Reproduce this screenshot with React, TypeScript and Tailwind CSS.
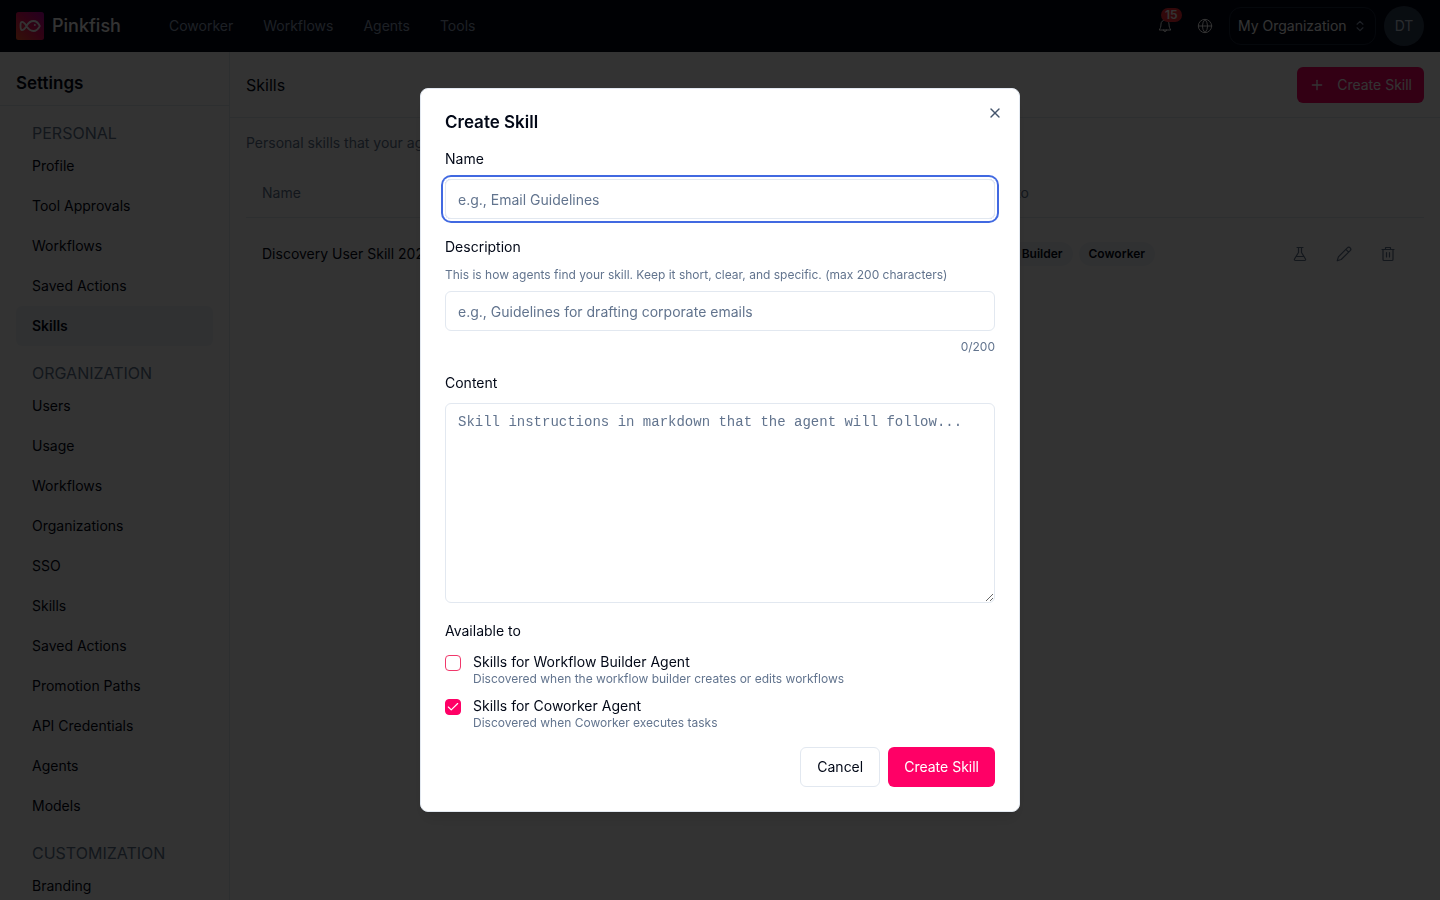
import { useState } from 'react'
import { Check, ChevronsUpDown, Globe, Plus, X } from 'lucide-react'

const NAV_LINKS = ['Coworker', 'Workflows', 'Agents', 'Tools']

const SECTIONS = [
    { title: 'PERSONAL', items: ['Profile', 'Tool Approvals', 'Workflows', 'Saved Actions', 'Skills'], active: 'Skills' },
    {
        title: 'ORGANIZATION',
        items: ['Users', 'Usage', 'Workflows', 'Organizations', 'SSO', 'Skills', 'Saved Actions', 'Promotion Paths', 'API Credentials', 'Agents', 'Models'],
    },
    { title: 'CUSTOMIZATION', items: ['Branding'] },
]

function Logo() {
    return (
        <svg viewBox="0 0 28 28" className="h-7 w-7" fill="none">
            <defs>
                <linearGradient id="logo" x1="0" y1="28" x2="28" y2="0" gradientUnits="userSpaceOnUse">
                    <stop stopColor="#ff5a2b" />
                    <stop offset="0.5" stopColor="#f0105e" />
                    <stop offset="1" stopColor="#b400a0" />
                </linearGradient>
            </defs>
            <rect width="28" height="28" rx="2.5" fill="url(#logo)" />
            <path
                d="M10.5 14C12.5 10.5 15 9 17.5 9C20.8 9 22.800 12 23.800 14C22.800 16 20.800 19 17.5 19C15 19 12.5 17.5 10.5 14C9 11.5 7.500 9.800 6 9.800C4.500 9.800 4.500 12 4.500 14S4.500 18.200 6 18.200C7.500 18.200 9 16.500 10.5 14Z"
                stroke="#fff"
                strokeWidth="1.8"
                strokeLinejoin="round"
            />
            <circle cx="18.800" cy="13" r="1" fill="#fff" />
        </svg>
    )
}

function BellIcon() {
    return (
        <svg viewBox="0 0 16 16" className="h-4 w-4" fill="none" stroke="currentColor" strokeLinecap="round" strokeLinejoin="round">
            <path d="M8 2a4 4 0 0 0-4 4c0 3-.8 4.500-1.800 6h11.600c-1-1.500-1.800-3-1.800-6a4 4 0 0 0-4-4zM6.500 12a1.500 1.500 0 0 0 3 0" />
        </svg>
    )
}

function FlaskIcon() {
    return (
        <svg viewBox="0 0 16 16" className="h-4 w-4" fill="none" stroke="currentColor" strokeWidth="1.2" strokeLinecap="round" strokeLinejoin="round">
            <path d="M5 1.500h6M6.500 1.500v5l-4 6.500a1 1 0 0 0 .9 1.500h9.200a1 1 0 0 0 .9-1.500l-4-6.500v-5M4.500 10.500h7" />
        </svg>
    )
}

function PencilIcon() {
    return (
        <svg viewBox="0 0 16 16" className="h-4 w-4" fill="none" stroke="currentColor" strokeWidth="1.2" strokeLinecap="round" strokeLinejoin="round">
            <path d="M11.300 1.800a1.900 1.900 0 0 1 2.900 2.900L5.200 13.500l-4 1.300 1.200-4zM9.800 3.300l2.900 2.900" />
        </svg>
    )
}

function TrashIcon() {
    return (
        <svg viewBox="0 0 16 16" className="h-4 w-4" fill="none" stroke="currentColor" strokeWidth="1.2" strokeLinecap="round" strokeLinejoin="round">
            <path d="M2 3.500h12M5.500 3.500v-2h5v2M3 3.500v10a1 1 0 0 0 1 1h8a1 1 0 0 0 1-1v-10M6.500 6.500v4.500M9.500 6.500v4.500" />
        </svg>
    )
}

function Header() {
    return (
        <header className="flex h-13 shrink-0 items-center bg-[#020617] px-4 text-sm text-white">
            <Logo />
            <span className="ml-2 text-lg font-medium">Pinkfish</span>
            <nav className="ml-12 flex gap-[30px] text-slate-400">
                {NAV_LINKS.map((link) => (
                    <a key={link} href="#">
                        {link}
                    </a>
                ))}
            </nav>
            <div className="ml-auto flex items-center">
                <button aria-label="Notifications" className="relative mr-6">
                    <BellIcon />
                    <span className="absolute -top-2.5 left-1 rounded-full bg-red-500 px-1 text-xs leading-3.5 font-semibold">15</span>
                </button>
                <button aria-label="Language" className="mr-4">
                    <Globe size={16} strokeWidth={1.5} />
                </button>
                <button className="mr-2 flex h-9.5 w-[147px] items-center justify-between rounded-xl border border-slate-800 px-2">
                    My Organization
                    <ChevronsUpDown size={14} strokeWidth={2} className="text-slate-400" />
                </button>
                <button className="h-10 w-10 rounded-full bg-slate-700 text-slate-300">DT</button>
            </div>
        </header>
    )
}

function Sidebar() {
    return (
        <aside className="w-[230px] shrink-0 overflow-hidden border-r border-slate-200">
            <h2 className="border-b border-slate-200 px-4 pt-[17px] pb-2 text-[17px] leading-7 font-semibold">Settings</h2>
            <div className="px-4 pt-[15px]">
                {SECTIONS.map((section) => (
                    <div key={section.title} className="mb-[15px]">
                        <h3 className="mb-px px-4 text-base text-slate-500">{section.title}</h3>
                        {section.items.map((item) => (
                            <a
                                key={item}
                                href="#"
                                className={`flex h-10 items-center rounded-md px-4 text-sm ${item === section.active ? 'bg-slate-100 font-semibold' : ''}`}
                            >
                                {item}
                            </a>
                        ))}
                    </div>
                ))}
            </div>
        </aside>
    )
}

function SkillsPage() {
    return (
        <main className="flex-1">
            <div className="flex h-[66px] items-center justify-between border-b border-slate-200 px-4">
                <h1 className="text-base">Skills</h1>
                <button className="flex h-9 items-center gap-3 rounded-md bg-[#ff0066] px-3 text-sm text-white">
                    <Plus size={16} strokeWidth={2} />
                    Create Skill
                </button>
            </div>
            <div className="px-4 pt-[15px] text-sm">
                <p className="text-slate-500">Personal skills that your agents can discover and use</p>
                <table className="mt-4 w-full text-left">
                    <thead>
                        <tr className="h-12 border-b border-slate-200 text-slate-500">
                            <th className="w-[46%] px-4 font-normal">Name</th>
                            <th className="w-[149px] px-4 font-normal">Description</th>
                            <th className="px-4 font-normal">Available to</th>
                            <th className="w-40" aria-label="Actions" />
                        </tr>
                    </thead>
                    <tbody>
                        <tr className="h-[74px]">
                            <td className="px-4">Discovery User Skill 2025</td>
                            <td className="px-4">Test</td>
                            <td className="px-4 text-xs font-semibold">
                                <div className="flex gap-1.5">
                                    <span className="rounded-full bg-slate-100 px-2.5 py-1">Workflow Builder</span>
                                    <span className="rounded-full bg-slate-100 px-2.5 py-1">Coworker</span>
                                </div>
                            </td>
                            <td className="px-4 text-slate-500">
                                <div className="flex justify-between px-3">
                                    <button aria-label="Test skill">
                                        <FlaskIcon />
                                    </button>
                                    <button aria-label="Edit skill">
                                        <PencilIcon />
                                    </button>
                                    <button aria-label="Delete skill">
                                        <TrashIcon />
                                    </button>
                                </div>
                            </td>
                        </tr>
                    </tbody>
                </table>
            </div>
        </main>
    )
}

function AgentOption({ id, label, hint, defaultChecked }: any) {
    return (
        <div className="flex gap-3">
            <span className="relative mt-0.5 h-4 w-4">
                <input
                    id={id}
                    type="checkbox"
                    defaultChecked={defaultChecked}
                    className="peer block h-4 w-4 appearance-none rounded border border-[#f0386b] checked:border-[#ff0066] checked:bg-[#ff0066]"
                />
                <Check size={14} strokeWidth={2} className="pointer-events-none absolute top-px left-px hidden text-white peer-checked:block" />
            </span>
            <label htmlFor={id} className="text-sm leading-4.5">
                {label}
                <span className="block text-xs leading-4 text-slate-500">{hint}</span>
            </label>
        </div>
    )
}

function CreateSkillDialog() {
    const [name, setName] = useState('')
    const [description, setDescription] = useState('')

    return (
        <div role="dialog" aria-modal="true" aria-labelledby="dialog-title" className="relative w-full max-w-[600px] rounded-lg border border-slate-200 bg-white p-6 text-sm shadow-lg">
            <button aria-label="Close" className="absolute top-4 right-4 text-slate-600">
                <X size={16} strokeWidth={2} />
            </button>
            <h2 id="dialog-title" className="text-[17px] leading-[18px] font-semibold">
                Create Skill
            </h2>
            <form className="mt-4">
                <label htmlFor="name" className="block leading-6">
                    Name
                </label>
                <input
                    id="name"
                    autoFocus
                    value={name}
                    onChange={(e) => setName(e.target.value)}
                    placeholder="e.g., Email Guidelines"
                    className="mt-2 block h-10 w-full rounded-md border border-slate-200 px-3 ring-[#4169e1] ring-offset-2 outline-none placeholder:text-slate-500 focus:ring-2"
                />
                <label htmlFor="description" className="mt-4 block leading-6">
                    Description
                </label>
                <p id="description-hint" className="mt-2 text-xs text-slate-500">
                    This is how agents find your skill. Keep it short, clear, and specific. (max 200 characters)
                </p>
                <input
                    id="description"
                    aria-describedby="description-hint"
                    maxLength={200}
                    value={description}
                    onChange={(e) => setDescription(e.target.value)}
                    placeholder="e.g., Guidelines for drafting corporate emails"
                    className="mt-2 block h-10 w-full rounded-md border border-slate-200 px-3 ring-[#4169e1] ring-offset-2 outline-none placeholder:text-slate-500 focus:ring-2"
                />
                <p className="mt-2 text-right text-xs text-slate-500">{description.length}/200</p>
                <label htmlFor="content" className="mt-4 block leading-6">
                    Content
                </label>
                <textarea
                    id="content"
                    placeholder="Skill instructions in markdown that the agent will follow..."
                    className="mt-2 block h-[200px] w-full rounded-md border border-slate-200 px-3 py-2 font-['Liberation_Mono',monospace] ring-[#4169e1] ring-offset-2 outline-none placeholder:text-slate-500 focus:ring-2"
                />
                <fieldset className="mt-4">
                    <legend className="leading-6">Available to</legend>
                    <div className="mt-2.5 flex flex-col gap-2.5">
                        <AgentOption id="builder" label="Skills for Workflow Builder Agent" hint="Discovered when the workflow builder creates or edits workflows" />
                        <AgentOption id="coworker" label="Skills for Coworker Agent" hint="Discovered when Coworker executes tasks" defaultChecked />
                    </div>
                </fieldset>
                <div className="mt-4 flex justify-end gap-2">
                    <button type="button" className="h-10 rounded-md border border-slate-200 px-4">
                        Cancel
                    </button>
                    <button type="submit" className="h-10 rounded-md bg-[#ff0066] px-4 text-white">
                        Create Skill
                    </button>
                </div>
            </form>
        </div>
    )
}

export default function App() {
    return (
        <div className="flex h-screen flex-col overflow-hidden bg-white font-['Inter',sans-serif] text-[#020817]">
            <Header />
            <div className="flex min-h-0 flex-1">
                <Sidebar />
                <SkillsPage />
            </div>
            <div className="fixed inset-0 flex items-center justify-center bg-black/80">
                <CreateSkillDialog />
            </div>
        </div>
    )
}
